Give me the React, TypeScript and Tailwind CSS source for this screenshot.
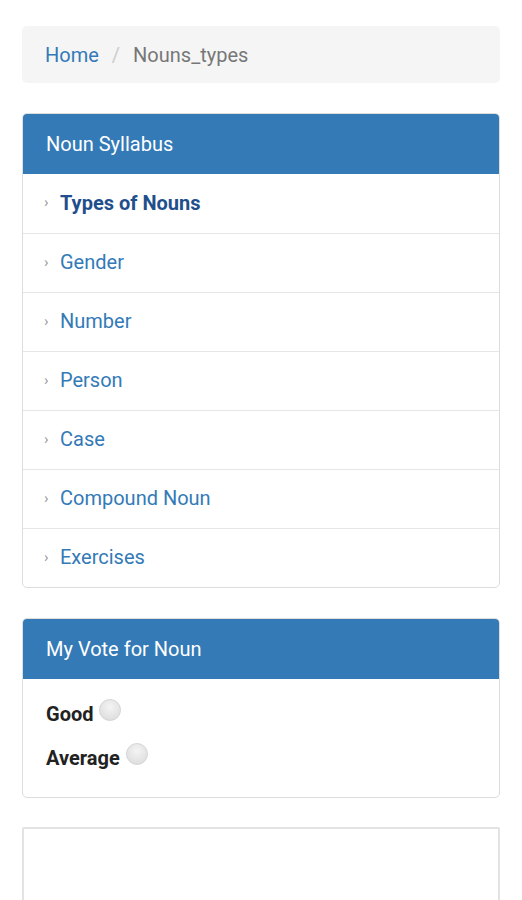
import React from "react";

const items = ["Types of Nouns", "Gender", "Number", "Person", "Case", "Compound Noun", "Exercises"];

function Radio() {
  return (
    <span className="inline-block w-[22px] h-[22px] rounded-full border border-[#d4d4d4] bg-[radial-gradient(circle_at_50%_35%,#f4f4f4,#d9d9d9)] ml-[6px] relative top-[-8px]" />
  );
}

export default function App() {
  return (
    <div className="h-[900px] overflow-hidden bg-white px-[22px] pt-[26px] text-[20px]" style={{ fontFamily: "Roboto, 'Noto Sans', sans-serif" }}>
      <div className="h-[57px] rounded-[5px] bg-[#f5f5f5] flex items-center px-[23px]">
        <span className="text-[#337ab7]">Home</span>
        <span className="text-[#cccccc] px-[13px]">/</span>
        <span className="text-[#777777]">Nouns_types</span>
      </div>

      <div className="mt-[30px] border border-[#dddddd] rounded-[5px] overflow-hidden">
        <div className="h-[60px] bg-[#337ab7] text-white flex items-center px-[23px]">Noun Syllabus</div>
        {items.map((t, i) => (
          <div key={t} className={`h-[59px] flex items-center pl-[21px] pb-[2px] ${i > 0 ? "border-t border-[#e6e6e6]" : ""}`}>
            <span className="text-[#9a9a9a] text-[15px] w-[16px]">›</span>
            <span className={i === 0 ? "text-[#1f4f8c] font-bold" : "text-[#337ab7]"}>{t}</span>
          </div>
        ))}
      </div>

      <div className="mt-[30px] border border-[#dddddd] rounded-[5px] overflow-hidden">
        <div className="h-[60px] bg-[#337ab7] text-white flex items-center px-[23px]">My Vote for Noun</div>
        <div className="px-[23px] pt-[20px] pb-[24px] flex flex-col gap-[14px]">
          <div className="flex items-end h-[30px] font-bold text-[#222]">Good<Radio /></div>
          <div className="flex items-end h-[30px] font-bold text-[#222]">Average<Radio /></div>
        </div>
      </div>

      <div className="mt-[29px] h-[200px] border-2 border-[#e3e3e3] rounded-[2px]" />
    </div>
  );
}
